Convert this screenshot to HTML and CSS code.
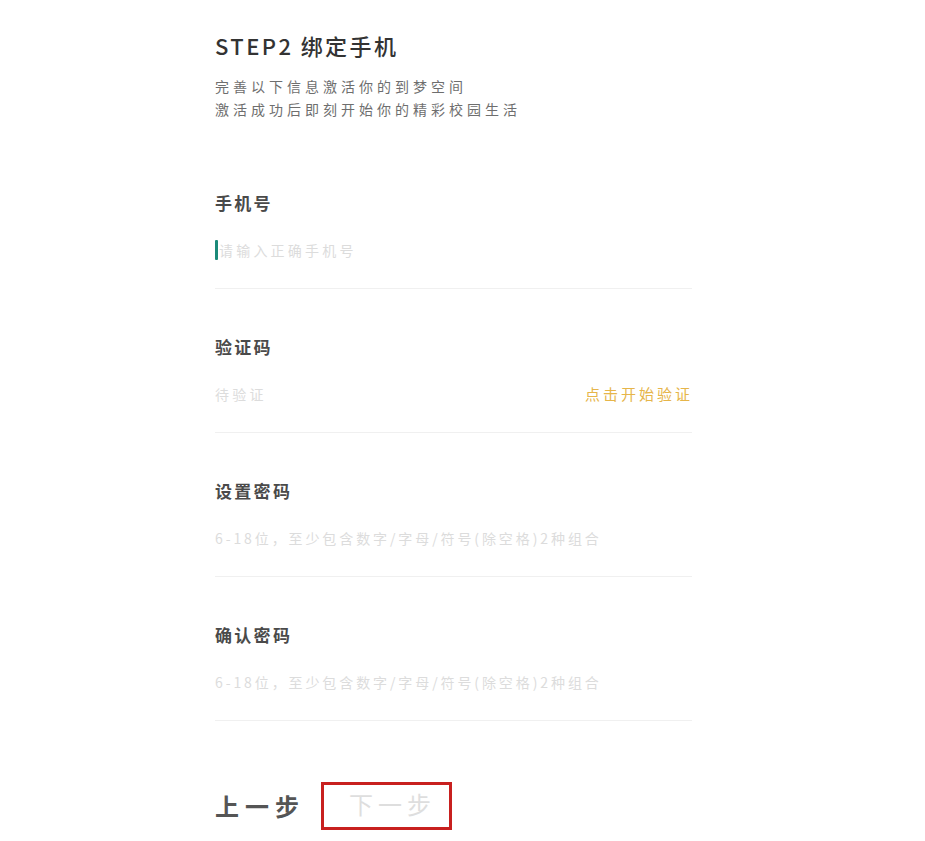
FILE: index.html
```html
<!DOCTYPE html>
<html lang="zh-CN">
<head>
<meta charset="utf-8">
<title>STEP2 绑定手机</title>
<link rel="stylesheet" href="styles.css">
</head>
<body>
<div class="page">
  <h1 class="title">STEP2 绑定手机</h1>
  <p class="sub">完善以下信息激活你的到梦空间</p>
  <p class="sub">激活成功后即刻开始你的精彩校园生活</p>

  <div class="fields">
    <div class="field">
      <div class="label">手机号</div>
      <div class="row"><span class="cursor"></span><span class="ph">请输入正确手机号</span></div>
    </div>
    <div class="field">
      <div class="label">验证码</div>
      <div class="row"><span class="ph">待验证</span><span class="verify">点击开始验证</span></div>
    </div>
    <div class="field">
      <div class="label">设置密码</div>
      <div class="row"><span class="ph ph-sm">6-18位，至少包含数字/字母/符号(除空格)2种组合</span></div>
    </div>
    <div class="field">
      <div class="label">确认密码</div>
      <div class="row"><span class="ph ph-sm">6-18位，至少包含数字/字母/符号(除空格)2种组合</span></div>
    </div>
  </div>

  <div class="actions">
    <span class="prev">上一步</span>
    <span class="next">下一步</span>
  </div>
</div>
</body>
</html>
```
FILE: styles.css
```css
html, body {
  margin: 0;
  padding: 0;
  background: #ffffff;
}
body {
  font-family: "Noto Sans CJK SC", "Noto Sans", sans-serif;
}
.page {
  padding: 30px 0 0 215px;
  width: 477px;
}
.title {
  margin: 0;
  font-size: 22px;
  line-height: 30px;
  font-weight: 500;
  color: #333333;
  letter-spacing: 2.4px;
}
.sub {
  margin: 0;
  font-size: 14px;
  line-height: 23px;
  color: #6e6e6e;
  letter-spacing: 4px;
}
.title + .sub {
  margin-top: 15px;
}
.fields {
  margin-top: 70px;
  display: flex;
  flex-direction: column;
  gap: 46px;
}
.field {
  border-bottom: 1px solid #f0f0f0;
}
.label {
  font-size: 17px;
  line-height: 24px;
  font-weight: 700;
  color: #4a4a4a;
  letter-spacing: 2.3px;
}
.row {
  margin-top: 23px;
  height: 24px;
  padding-bottom: 26px;
  display: flex;
  align-items: center;
  justify-content: space-between;
}
.row .cursor + .ph {
  margin-left: 1px;
  margin-right: auto;
}
.cursor {
  width: 3px;
  height: 20px;
  background: #1b8a79;
  border-radius: 1px;
}
.ph {
  font-size: 14px;
  line-height: 24px;
  color: #dcdcdc;
  letter-spacing: 3.2px;
}
.ph-sm {
  letter-spacing: 2.9px;
}
.verify {
  font-size: 15px;
  line-height: 24px;
  color: #e6b54a;
  letter-spacing: 3px;
  margin-right: -1px;
}
.actions {
  margin-top: 61px;
  display: flex;
  align-items: center;
  gap: 16px;
}
.prev {
  font-size: 24px;
  line-height: 34px;
  font-weight: 700;
  color: #555555;
  letter-spacing: 6px;
}
.next {
  box-sizing: border-box;
  width: 131px;
  height: 48px;
  border: 3px solid #c8201f;
  padding-left: 25px;
  font-size: 24px;
  line-height: 38px;
  color: #dedede;
  letter-spacing: 5px;
}
```
